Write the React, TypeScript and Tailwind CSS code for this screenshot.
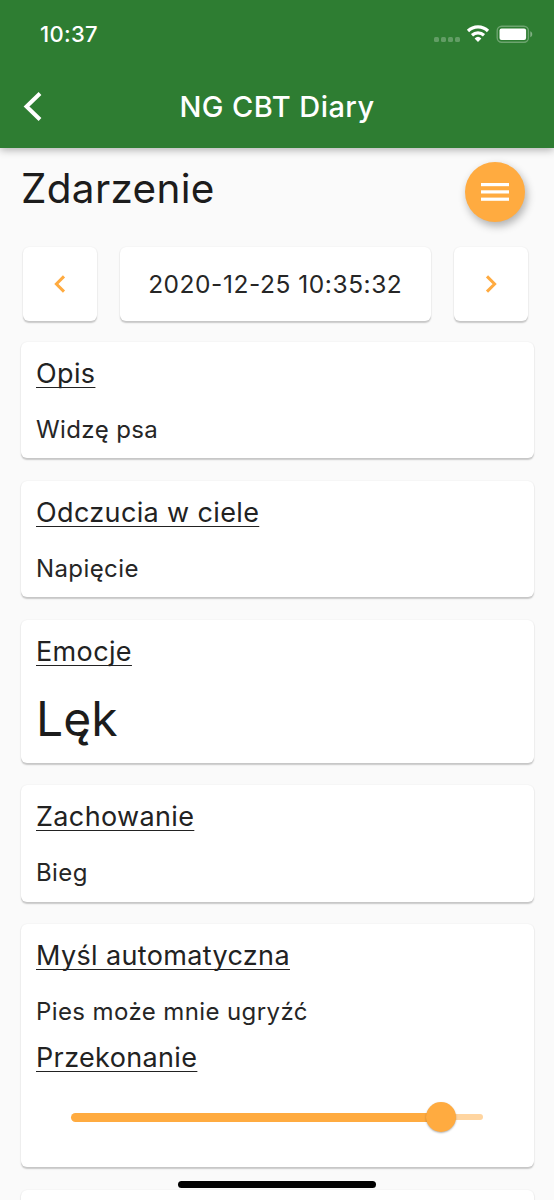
import React from "react";

type Block = {
    title: string;
    value: string;
    large?: boolean;
};

// widths are tuned per text style, the app uses slightly loose tracking
const titleClass =
    "text-[27px] leading-8 tracking-[0.36px] underline decoration-[1.4px] underline-offset-[3.5px] [text-decoration-skip-ink:none] whitespace-nowrap text-[#222]";
const bodyClass = "leading-[30px] whitespace-nowrap text-[#262626]";
const cardClass =
    "bg-white rounded-md shadow-[0_1.5px_1.5px_rgba(0,0,0,0.2),0_0_2px_rgba(0,0,0,0.05)]";

const blocks: Block[] = [
    { title: "Opis", value: "Widzę psa" },
    { title: "Odczucia w ciele", value: "Napięcie" },
    { title: "Emocje", value: "Lęk", large: true },
    { title: "Zachowanie", value: "Bieg" },
];

const StatusBar = () => {
    return (
        <div className="flex h-[68px] items-center justify-between pl-10 pr-[21px]">
            <span className="text-[22px] font-medium leading-7 tracking-[0.3px]">
                10:37
            </span>
            <svg width="100" height="20" viewBox="0 0 100 20" fill="none">
                <g fill="#fff" fillOpacity="0.25">
                    <rect x="1" y="13" width="5" height="5" rx="1.6" />
                    <rect x="8" y="13" width="5" height="5" rx="1.6" />
                    <rect x="15" y="13" width="5" height="5" rx="1.6" />
                    <rect x="22" y="13" width="5" height="5" rx="1.6" />
                </g>
                <g stroke="#fff" strokeWidth="3.2">
                    <path d="M35 7a14.3 14.3 0 0 1 20 0" />
                    <path d="M39 11.2a9 9 0 0 1 12 0" />
                </g>
                <path d="M41.6 14.4a5 5 0 0 1 6.8 0L45 18Z" fill="#fff" />
                <rect
                    x="64.2"
                    y="2.2"
                    width="31.2"
                    height="16"
                    rx="4.5"
                    stroke="#fff"
                    strokeOpacity="0.3"
                    strokeWidth="1.4"
                />
                <rect x="66.5" y="4.5" width="26.6" height="11.4" rx="2" fill="#fff" />
                <path d="M97.3 7.2c2.6 1 2.6 5 0 6Z" fill="#fff" fillOpacity="0.4" />
            </svg>
        </div>
    );
};

const Header = () => {
    return (
        <header className="relative h-[148px] shrink-0 bg-[#2e7d32] text-white shadow-[0_2px_8px_rgba(0,0,0,0.3)]">
            <StatusBar />
            <div className="grid h-[78px] grid-cols-[80px_1fr_80px] items-center">
                <svg width="80" height="34" viewBox="0 0 80 34" fill="none">
                    <path d="M40 3.5 26.5 16.5 40 29.5" stroke="#fff" strokeWidth="4" />
                </svg>
                <h1 className="text-center text-[29px] font-medium leading-9 tracking-[0.45px]">
                    NG CBT Diary
                </h1>
            </div>
        </header>
    );
};

const Chevron = ({ flip = false }: { flip?: boolean }) => {
    return (
        <svg
            width="12"
            height="18"
            viewBox="0 0 12 18"
            fill="none"
            className={flip ? "rotate-180" : ""}
        >
            <path d="M10 1.4 2.4 9 10 16.6" stroke="#ffab40" strokeWidth="3" />
        </svg>
    );
};

const Slider = ({ value }: { value: number }) => {
    return (
        <div className="ml-[35px] mr-[36px] mt-[28px] flex h-[30px] items-center">
            <div
                className="h-[9px] rounded-l-full bg-[#ffab40]"
                style={{ width: `${value}%` }}
            />
            <div className="z-10 -mx-[15px] size-[30px] shrink-0 rounded-full bg-[#ffab40] shadow-[0_1px_2px_rgba(0,0,0,0.3)]" />
            <div className="h-1.5 flex-1 rounded-r-full bg-[#ffd5a0]" />
        </div>
    );
};

const App = () => {
    return (
        <div className="relative flex h-[1200px] w-full flex-col overflow-hidden bg-[#fafafa] font-['Inter',sans-serif] text-[#1c1c1c]">
            <Header />

            <div className="flex h-[99px] shrink-0 items-start justify-between pl-[21px] pr-[29px] pt-[14px]">
                <h2 className="text-[40.5px] leading-[53px] tracking-[0.3px]">
                    Zdarzenie
                </h2>
                <button className="flex size-[60px] items-center justify-center rounded-full bg-[#ffab40] shadow-[2px_4px_9px_rgba(0,0,0,0.3)]">
                    <svg width="28" height="18" viewBox="0 0 28 18" fill="#fff">
                        <rect width="28" height="3.2" />
                        <rect y="7.3" width="28" height="3.2" />
                        <rect y="14.6" width="28" height="3.2" />
                    </svg>
                </button>
            </div>

            <div className="flex h-[73.5px] shrink-0 gap-[23px] pl-[23px] pr-[26.5px]">
                <button className={`${cardClass} flex w-[74px] items-center justify-center`}>
                    <Chevron />
                </button>
                <div className={`${cardClass} flex flex-1 items-center justify-center pt-px`}>
                    <span className={`${bodyClass} text-[24.5px] tracking-[0.55px]`}>
                        2020-12-25 10:35:32
                    </span>
                </div>
                <button className={`${cardClass} flex w-[74px] items-center justify-center`}>
                    <Chevron flip />
                </button>
            </div>

            <main className="mt-[21px] flex flex-col gap-[22.5px] pl-[21px] pr-[20.5px]">
                {blocks.map((block) => (
                    <section key={block.title} className={`${cardClass} px-[15px] pb-[13.5px] pt-4`}>
                        <h3 className={titleClass}>{block.title}</h3>
                        {block.large ? (
                            <p className="mb-px mt-[22.5px] text-[48px] leading-[58px]">
                                {block.value}
                            </p>
                        ) : (
                            <p className={`${bodyClass} mt-[25px] text-[24px] tracking-[0.4px]`}>
                                {block.value}
                            </p>
                        )}
                    </section>
                ))}

                <section className={`${cardClass} h-[243px] px-[15px] pt-4`}>
                    <h3 className={titleClass}>Myśl automatyczna</h3>
                    <p className={`${bodyClass} mt-[25px] text-[24px] tracking-[0.4px]`}>
                        Pies może mnie ugryźć
                    </p>
                    <h3 className={`${titleClass} mt-[15px]`}>Przekonanie</h3>
                    <Slider value={90} />
                </section>

                <section className={`${cardClass} h-32`} />
            </main>

            {/* home indicator floats over the scrolled list */}
            <div className="absolute bottom-[12px] left-1/2 h-[7px] w-[198px] -translate-x-1/2 rounded-full bg-black" />
        </div>
    );
};

export default App;
